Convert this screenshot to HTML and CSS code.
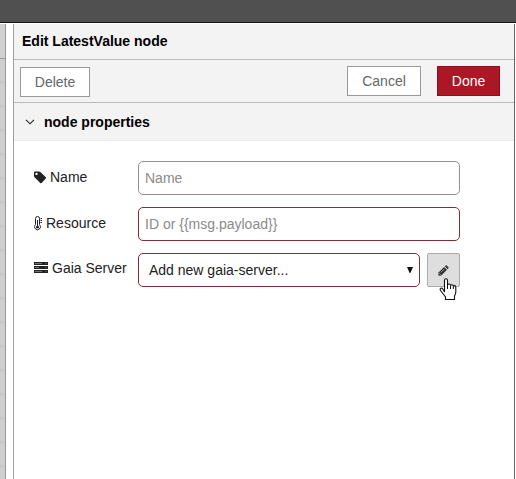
FILE: index.html
```
<!DOCTYPE html>
<html lang="en">
<head>
<meta charset="utf-8">
<title>Edit LatestValue node</title>
<link rel="stylesheet" href="styles.css">
</head>
<body>
<div class="topbar"></div>
<div class="workspace">
  <div class="palette"></div>
  <main class="tray">
    <header class="title">Edit LatestValue node</header>
    <div class="toolbar">
      <button class="btn delete">Delete</button>
      <div class="actions">
        <button class="btn cancel">Cancel</button>
        <button class="btn done">Done</button>
      </div>
    </div>
    <div class="section">
      <svg class="chevron" width="10" height="6" viewBox="0 0 10 6"><path d="M1 .8 5 4.8 9 .8" fill="none" stroke="#222" stroke-width="1.1"/></svg>
      <span>node properties</span>
    </div>
    <form class="form">
      <div class="row">
        <label for="name"><svg class="tag" width="13" height="13" viewBox="0 0 13 13"><path fill="#222" fill-rule="evenodd" d="M0 1.3Q0 .4.9.4H5q.8 0 1.4.6l5.4 5.2q.7.7 0 1.4l-4.2 4.3q-.7.7-1.4 0L.8 6.5Q0 5.800 0 5zM2.500 1.700a1.200 1.200 0 1 0 .01 0z"/></svg>Name</label>
        <input id="name" placeholder="Name">
      </div>
      <div class="row">
        <label for="resource"><svg class="thermo" width="9" height="15" viewBox="0 0 9 15"><path d="M1.500 8.500V2.500a2 2 0 0 1 4 0v6a3 3 0 1 1-4 0z" fill="none" stroke="#222"/><path d="M3 4h1v6H3zM6.500 2H8v1H6.500zM6.500 4H8v1H6.500zM6.500 6H8v1H6.500z" fill="#222"/><circle cx="3.500" cy="11" r="1.500" fill="#222"/></svg>Resource</label>
        <input id="resource" class="invalid" placeholder="ID or {{msg.payload}}">
      </div>
      <div class="row">
        <label class="server-label"><svg class="server" width="14" height="12" viewBox="0 0 14 12"><path fill="#222" d="M0 0h14v3H0zM0 4h14v3H0zM0 8h14v3H0z"/><path stroke="#888" stroke-width=".8" d="M1 1.500h7M1 5.500h4M1 9.500h7M11.500 1.500h1M11.500 5.500h1M11.500 9.500h1"/></svg>Gaia Server</label>
        <div class="select invalid"><span>Add new gaia-server...</span><svg width="6" height="6" viewBox="0 0 6 6"><path d="M0 0h6L3.400 6h-.8z" fill="#111"/></svg></div>
        <button type="button" class="edit" aria-label="Edit">
          <svg class="pencil" width="11" height="11" viewBox="0 0 12 12"><path fill="#333" d="m.5 8.300 6.200-6.200 3.100 3.100-6.200 6.200-3.100.4zM7.400 1.400 8.300.5q.6-.5 1.200 0l1.900 1.900q.5.600 0 1.200l-.9.900z"/><path d="m1.300 9 1.600 1.600M3 8.100l3.700-3.700" stroke="#bbb" stroke-width=".8"/></svg>
          <svg class="pointer" width="18" height="23" viewBox="0 0 18 23"><path d="M5.500 14V2.500q0-1.700 1.500-1.700t1.500 1.700V7q.3-1 1.500-1 1.400 0 1.500 1.500.3-.8 1.400-.8 1.300 0 1.500 1.500.3-.6 1.100-.6 1.300 0 1.300 1.700V14q0 2-1.300 4v3.500H6.500V19L2.300 13.500Q.4 11.300 1.600 10.400q1-.8 2.300.6z" fill="#fff" stroke="#111" stroke-width="1.100"/><path d="M8.500 7v4M11.500 7.500V11M14.300 8.500V11" stroke="#111"/></svg>
        </button>
      </div>
    </form>
  </main>
</div>
</body>
</html>
```
FILE: styles.css
```
* { box-sizing: border-box; }
body {
  margin: 0;
  height: 479px;
  overflow: hidden;
  background: #fff;
  color: #222;
  font: 14px/20px "Liberation Sans", Arial, sans-serif;
}
svg { display: block; flex: none; }
.topbar { height: 23px; background: #505050; border-bottom: 1px solid #111; }
.workspace { display: flex; height: 456px; padding-top: 1px; }
.palette {
  width: 6px;
  border-right: 1px solid #999;
  background:
    linear-gradient(#d0d0d0 0 34px, #999 34px 35px, transparent 35px),
    repeating-linear-gradient(#cecece 0 10px, #c2c2c2 10px 11px, #cecece 11px 24px);
}
.tray {
  width: 502px;
  margin-left: 7px;
  border-left: 1px solid #a0a0a0;
  border-right: 1px solid #666;
}
.title {
  height: 36px;
  padding: 7px 8px;
  border-bottom: 1px solid #bbb;
  background: #f3f3f3;
  color: #000;
  font-weight: bold;
}
.toolbar {
  display: flex;
  justify-content: space-between;
  height: 43px;
  padding: 6px 14px 0 6px;
  border-bottom: 1px solid #bbb;
  background: #f3f3f3;
}
.actions { display: flex; gap: 16px; }
.btn {
  height: 30px;
  padding: 0;
  border: 1px solid #999;
  background: #fff;
  color: #666;
  font: inherit;
}
.delete { width: 70px; margin-top: 1px; }
.cancel { width: 74px; }
.done { width: 63px; border-color: #8c101c; background: #ad1625; color: #fff; }
.section {
  display: flex;
  align-items: center;
  gap: 9px;
  height: 38px;
  padding-left: 11px;
  border-bottom: 1px solid #ebebeb;
  background: #f3f3f3;
  color: #000;
  font-weight: bold;
}
.form {
  display: flex;
  flex-direction: column;
  gap: 12px;
  padding: 20px 0 0 20px;
}
.row { display: flex; height: 34px; }
label { display: flex; align-items: center; width: 104px; padding-bottom: 2px; white-space: nowrap; }
.server-label { padding-bottom: 4px; }
.tag { margin-right: 3px; }
.thermo { margin-right: 3px; }
.server { margin-right: 4px; }
input, .select {
  width: 322px;
  height: 34px;
  padding: 0 6px;
  border: 1px solid #929292;
  border-radius: 5px;
  background: #fff;
  font: inherit;
}
input::placeholder { color: #8b8b8b; opacity: 1; }
input.invalid, .select.invalid { border-color: #7c3039; }
.select {
  display: flex;
  align-items: center;
  justify-content: space-between;
  width: 282px;
  padding-left: 10px;
}
.edit {
  position: relative;
  display: flex;
  align-items: center;
  justify-content: center;
  width: 33px;
  height: 34px;
  margin-left: 7px;
  padding: 0;
  border: 1px solid #aaa;
  border-radius: 2px;
  background: #dedede;
}
.pointer { position: absolute; left: 11px; top: 24px; }
```
